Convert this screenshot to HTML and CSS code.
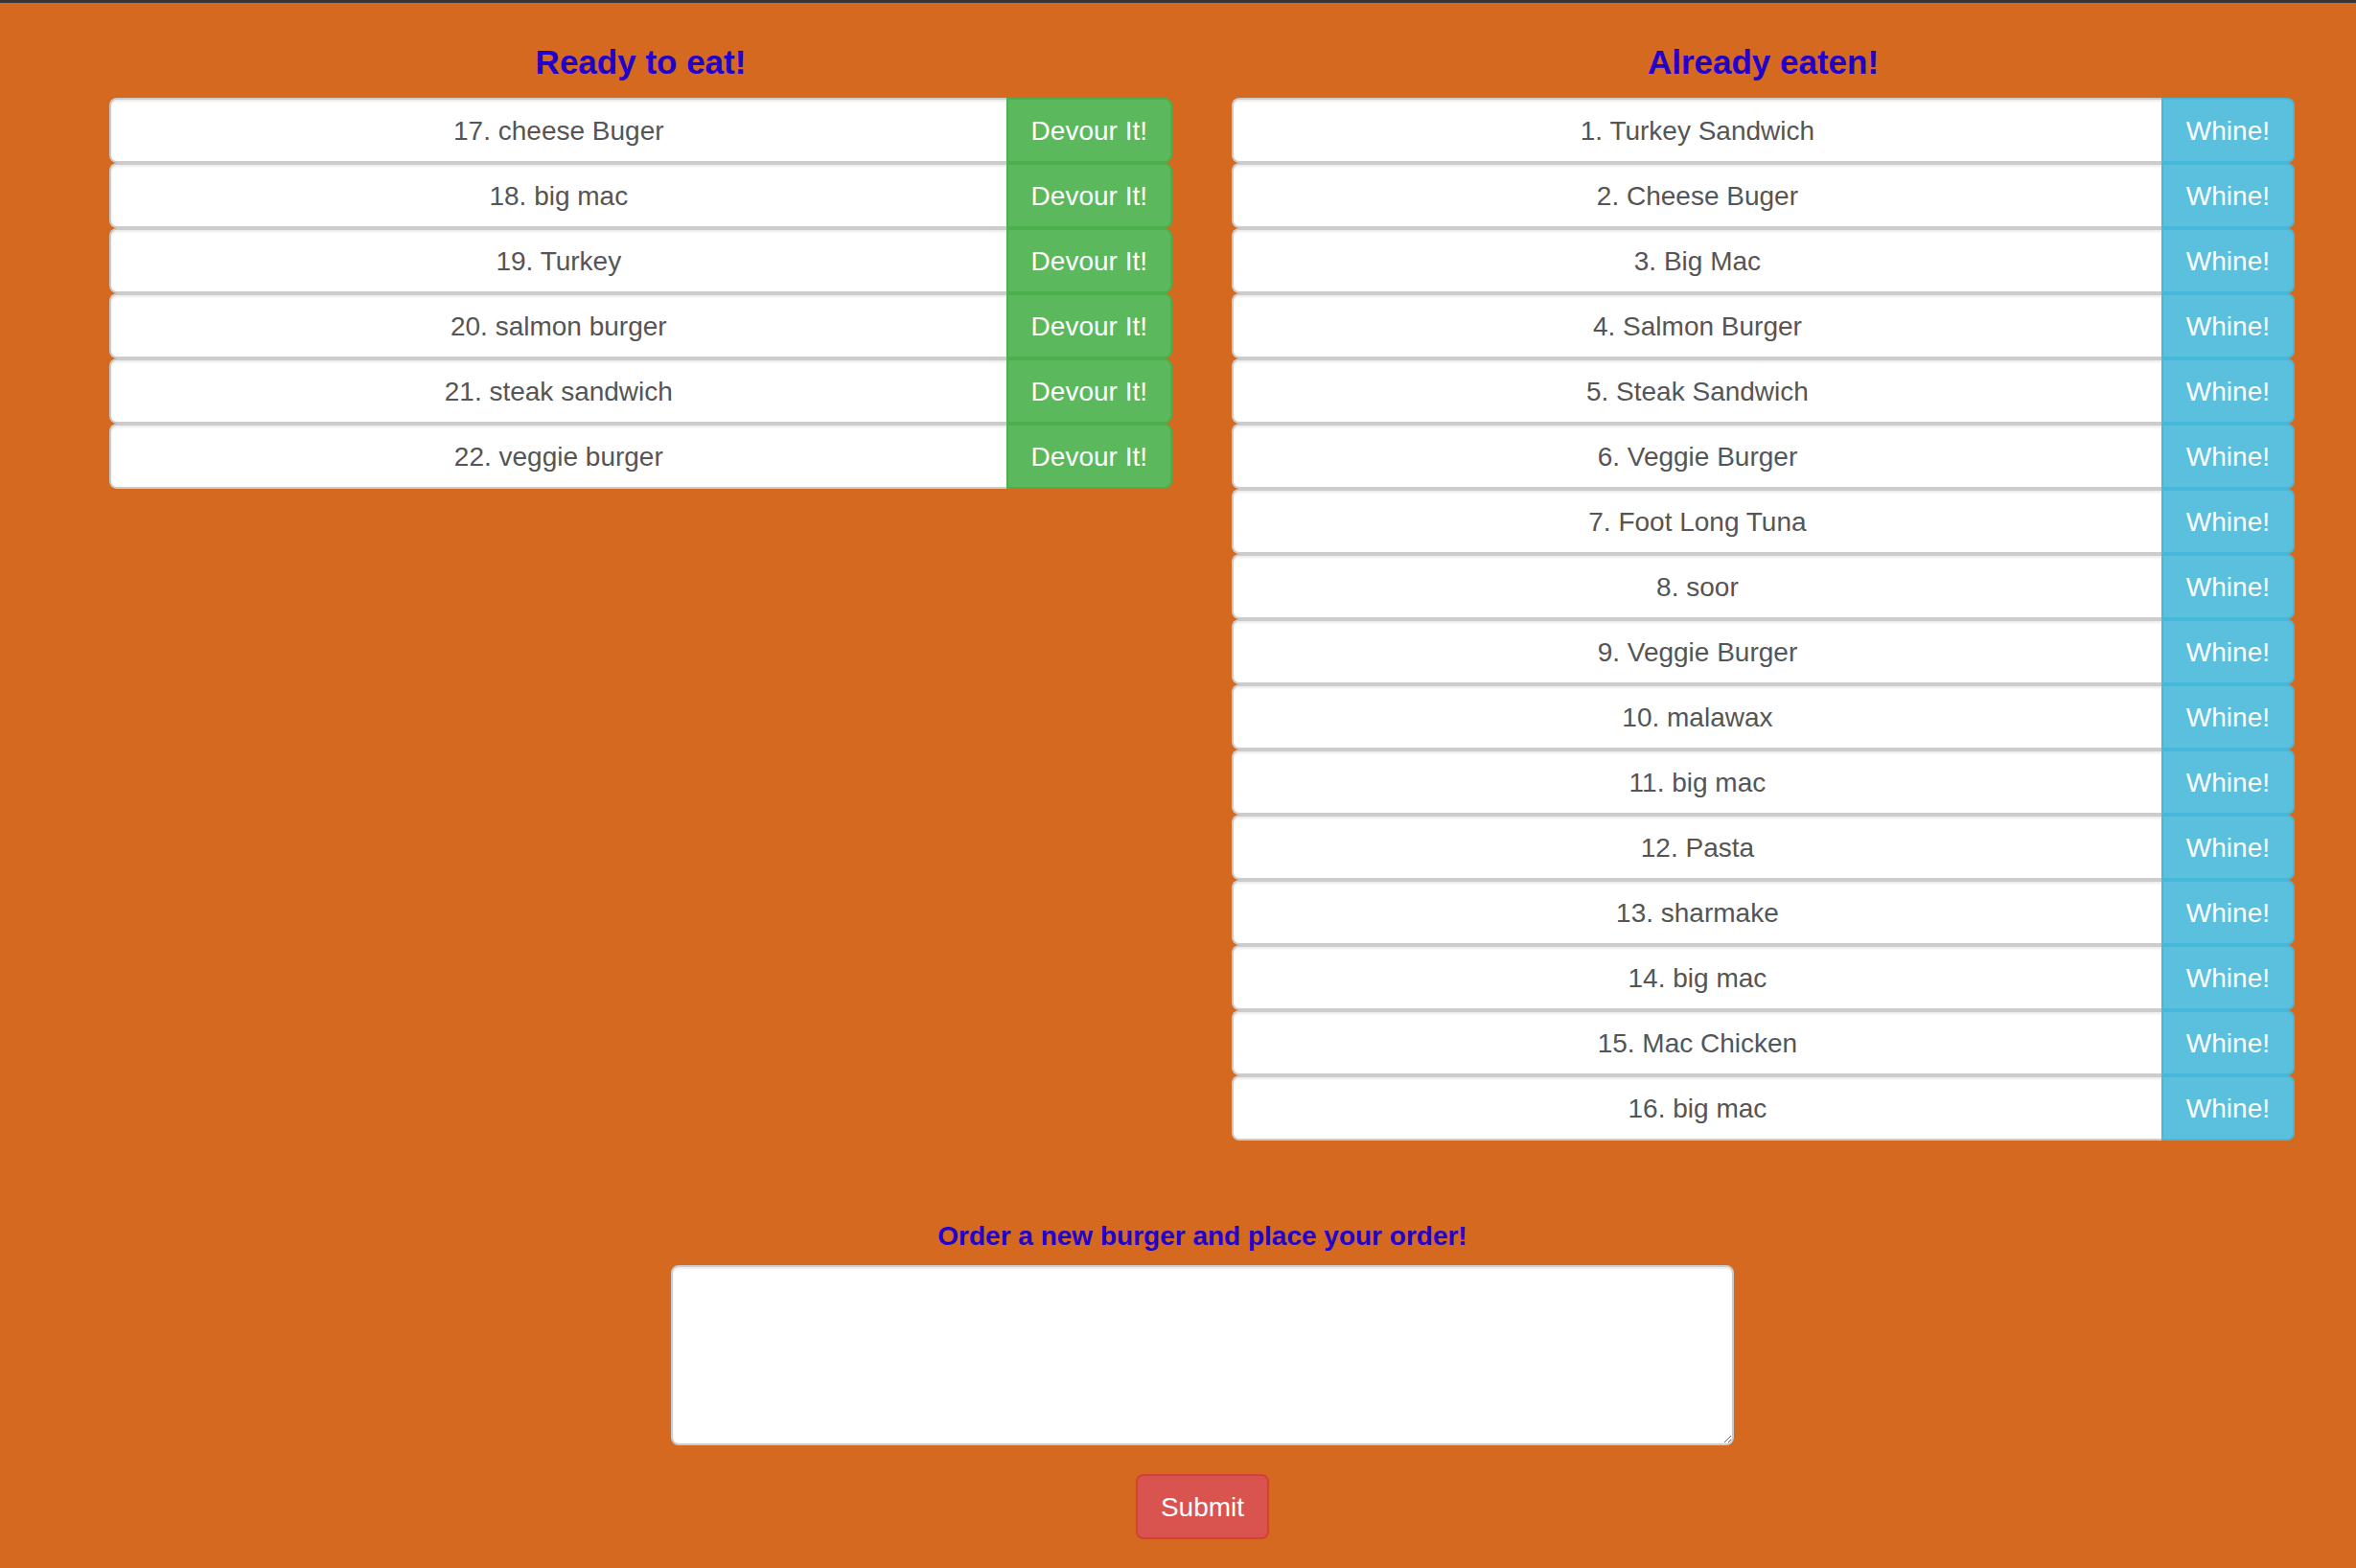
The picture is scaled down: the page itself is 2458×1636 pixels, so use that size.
FILE: index.html
```html
<!DOCTYPE html>
<html lang="en">
<head>
<meta charset="utf-8">
<title>Eat-Da-Burger</title>
<link rel="stylesheet" href="styles.css">
</head>
<body>
<div class="topbar"></div>
<div class="container">
  <div class="columns">
    <section class="column">
      <h4 class="col-title">Ready to eat!</h4>
      <div class="list">
        <div class="item"><div class="item-name">17. cheese Buger</div><button class="btn btn-devour">Devour It!</button></div>
        <div class="item"><div class="item-name">18. big mac</div><button class="btn btn-devour">Devour It!</button></div>
        <div class="item"><div class="item-name">19. Turkey</div><button class="btn btn-devour">Devour It!</button></div>
        <div class="item"><div class="item-name">20. salmon burger</div><button class="btn btn-devour">Devour It!</button></div>
        <div class="item"><div class="item-name">21. steak sandwich</div><button class="btn btn-devour">Devour It!</button></div>
        <div class="item"><div class="item-name">22. veggie burger</div><button class="btn btn-devour">Devour It!</button></div>
      </div>
    </section>
    <section class="column">
      <h4 class="col-title">Already eaten!</h4>
      <div class="list">
        <div class="item"><div class="item-name">1. Turkey Sandwich</div><button class="btn btn-whine">Whine!</button></div>
        <div class="item"><div class="item-name">2. Cheese Buger</div><button class="btn btn-whine">Whine!</button></div>
        <div class="item"><div class="item-name">3. Big Mac</div><button class="btn btn-whine">Whine!</button></div>
        <div class="item"><div class="item-name">4. Salmon Burger</div><button class="btn btn-whine">Whine!</button></div>
        <div class="item"><div class="item-name">5. Steak Sandwich</div><button class="btn btn-whine">Whine!</button></div>
        <div class="item"><div class="item-name">6. Veggie Burger</div><button class="btn btn-whine">Whine!</button></div>
        <div class="item"><div class="item-name">7. Foot Long Tuna</div><button class="btn btn-whine">Whine!</button></div>
        <div class="item"><div class="item-name">8. soor</div><button class="btn btn-whine">Whine!</button></div>
        <div class="item"><div class="item-name">9. Veggie Burger</div><button class="btn btn-whine">Whine!</button></div>
        <div class="item"><div class="item-name">10. malawax</div><button class="btn btn-whine">Whine!</button></div>
        <div class="item"><div class="item-name">11. big mac</div><button class="btn btn-whine">Whine!</button></div>
        <div class="item"><div class="item-name">12. Pasta</div><button class="btn btn-whine">Whine!</button></div>
        <div class="item"><div class="item-name">13. sharmake</div><button class="btn btn-whine">Whine!</button></div>
        <div class="item"><div class="item-name">14. big mac</div><button class="btn btn-whine">Whine!</button></div>
        <div class="item"><div class="item-name">15. Mac Chicken</div><button class="btn btn-whine">Whine!</button></div>
        <div class="item"><div class="item-name">16. big mac</div><button class="btn btn-whine">Whine!</button></div>
      </div>
    </section>
  </div>
  <form class="order-form">
    <label class="order-label" for="burger">Order a new burger and place your order!</label>
    <textarea class="order-text" id="burger"></textarea>
    <div class="submit-row"><button type="button" class="btn btn-submit">Submit</button></div>
  </form>
</div>
</body>
</html>
```
FILE: styles.css
```css
html {
  overflow: hidden;
}
body {
  margin: 0;
  background: #d4691f;
  font-family: "Liberation Sans", Arial, Helvetica, sans-serif;
  font-size: 28px;
  color: #555;
}
.topbar {
  height: 3px;
  background: #353535;
}
.container {
  width: 2342px;
  padding-left: 83px;
  padding-top: 42px;
}
.columns {
  display: grid;
  grid-template-columns: 1109px 1109px;
  column-gap: 62px;
  padding: 0 31px;
  align-items: start;
}
.col-title {
  margin: 0 0 17px;
  font-size: 35px;
  line-height: 40px;
  font-weight: 700;
  color: #2200cc;
  text-align: center;
}
.list {
  display: flex;
  flex-direction: column;
}
.item {
  display: flex;
  height: 68px;
}
.item-name {
  flex: 1;
  box-sizing: border-box;
  height: 68px;
  padding: 13px 24px 11px;
  line-height: 40px;
  border: 2px solid #ccc;
  border-right: 0;
  border-radius: 8px 0 0 8px;
  background: #fff;
  box-shadow: inset 0 2px 2px rgba(0, 0, 0, 0.075);
  text-align: center;
  color: #555;
  white-space: nowrap;
}
.btn {
  box-sizing: border-box;
  height: 68px;
  margin: 0;
  padding: 13px 24px 11px;
  font-family: "Liberation Sans", Arial, Helvetica, sans-serif;
  font-size: 28px;
  line-height: 40px;
  color: #fff;
  border: 2px solid transparent;
  cursor: pointer;
  white-space: nowrap;
}
.btn-devour {
  background: #5cb85c;
  border-color: #4cae4c;
  border-radius: 0 8px 8px 0;
}
.btn-whine {
  background: #5bc0de;
  border-color: #46b8da;
  border-radius: 0 8px 8px 0;
}
.order-form {
  width: 1109px;
  margin: 80px 0 0 617px;
}
.order-label {
  display: block;
  margin-bottom: 10px;
  font-size: 28px;
  line-height: 40px;
  font-weight: 700;
  color: #2200cc;
  text-align: center;
}
.order-text {
  display: block;
  box-sizing: border-box;
  width: 1109px;
  height: 188px;
  margin: 0;
  padding: 12px 24px;
  border: 2px solid #ccc;
  border-radius: 8px;
  background: #fff;
  box-shadow: inset 0 2px 2px rgba(0, 0, 0, 0.075);
  font-family: "Liberation Sans", Arial, sans-serif;
  font-size: 28px;
  color: #555;
}
.submit-row {
  display: flex;
  justify-content: center;
  margin-top: 30px;
}
.btn-submit {
  background: #d9534f;
  border-color: #d43f3a;
  border-radius: 8px;
}
```
